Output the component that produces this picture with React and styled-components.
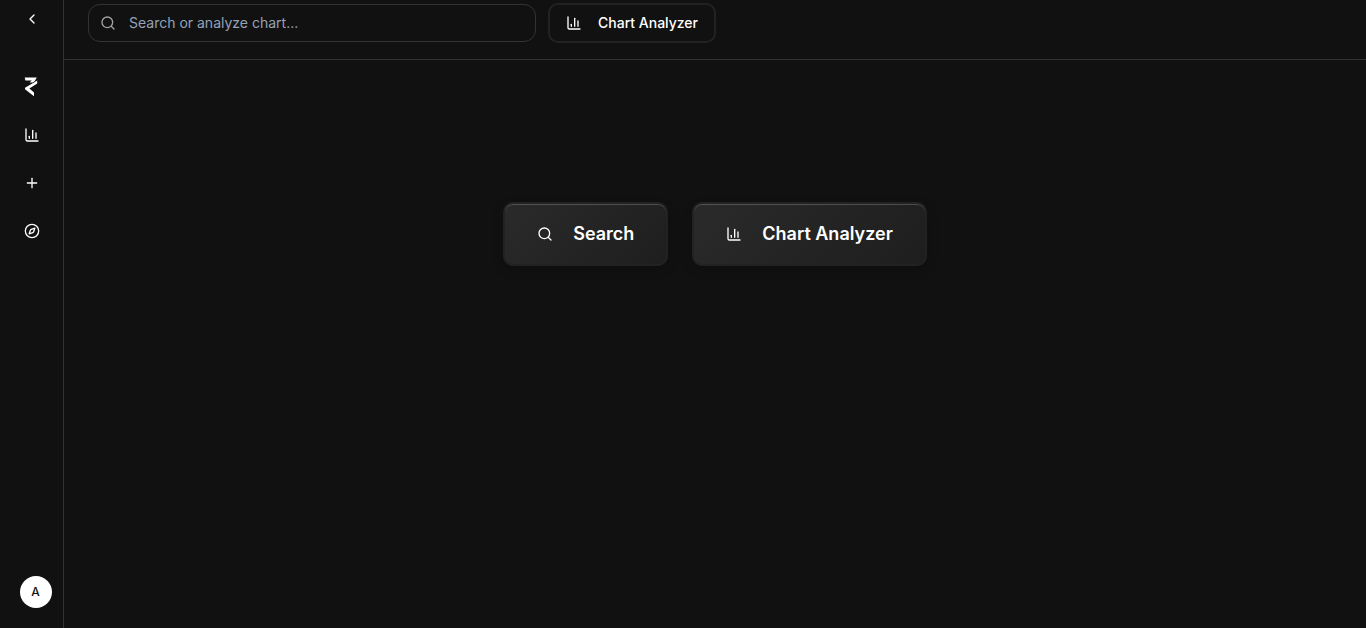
import React from "react";
import styled, { createGlobalStyle } from "styled-components";
import {
  ChartColumn,
  ChevronLeft,
  Compass,
  Plus,
  Search,
} from "lucide-react";

const RupeeLogo = () => (
  <svg width="16" height="20" viewBox="0 0 16 20" fill="#fff" aria-hidden="true">
    <path d="M0.7 0.4H12.8L10.6 4.2L8.6 5.6H5.6L7.8 3.4H1.4Z" />
    <path d="M13.2 3.4V6.4L5.4 11.4L10 15.6V19.2L1 12.2V10.8L9.6 5.8Z" />
  </svg>
);

const navItems = [
  { label: "Home", icon: <RupeeLogo /> },
  { label: "Charts", icon: <ChartColumn size={16} /> },
  { label: "New", icon: <Plus size={16} /> },
  { label: "Discover", icon: <Compass size={16} /> },
];

export default function App() {
  return (
    <>
      <GlobalStyle />
      <Layout>
        <Sidebar>
          <CollapseButton aria-label="Collapse sidebar">
            <ChevronLeft size={16} />
          </CollapseButton>
          <Nav>
            {navItems.map((item) => (
              <NavLink key={item.label} href="#" aria-label={item.label}>
                {item.icon}
              </NavLink>
            ))}
          </Nav>
          <Avatar aria-label="Account">A</Avatar>
        </Sidebar>
        <Content>
          <Header>
            <SearchBox>
              <Search size={16} />
              <input
                type="text"
                aria-label="Search"
                placeholder="Search or analyze chart..."
              />
            </SearchBox>
            <HeaderButton>
              <ChartColumn size={16} />
              Chart Analyzer
            </HeaderButton>
          </Header>
          <Main>
            <ActionButton>
              <Search size={16} />
              Search
            </ActionButton>
            <ActionButton>
              <ChartColumn size={16} />
              Chart Analyzer
            </ActionButton>
          </Main>
        </Content>
      </Layout>
    </>
  );
}

const GlobalStyle = createGlobalStyle`
  * {
    box-sizing: border-box;
  }
  body {
    margin: 0;
    background-color: #111111;
    color: #ffffff;
    font-family: "Inter", sans-serif;
  }
  button,
  input {
    font-family: inherit;
  }
  svg {
    flex-shrink: 0;
  }
`;

const Layout = styled.div`
  display: flex;
  min-height: 100vh;
`;

const Sidebar = styled.aside`
  display: flex;
  flex-direction: column;
  align-items: center;
  width: 64px;
  flex-shrink: 0;
  padding: 3px 0 20px;
  border-right: 1px solid #333333;
`;

const CollapseButton = styled.button`
  display: flex;
  align-items: center;
  justify-content: center;
  width: 32px;
  height: 32px;
  padding: 0;
  border: none;
  background: none;
  color: #ffffff;
  cursor: pointer;
`;

const Nav = styled.nav`
  display: flex;
  flex-direction: column;
  gap: 8px;
  margin-top: 32px;
`;

const NavLink = styled.a`
  display: flex;
  align-items: center;
  justify-content: center;
  width: 40px;
  height: 40px;
  color: #ffffff;
`;

const Avatar = styled.button`
  width: 32px;
  height: 32px;
  margin-top: auto;
  margin-left: 8px;
  padding: 0;
  border: none;
  border-radius: 50%;
  background-color: #ffffff;
  color: #111111;
  font-size: 12px;
  line-height: 16px;
  font-weight: 500;
  cursor: pointer;
`;

const Content = styled.div`
  display: flex;
  flex-direction: column;
  flex: 1;
  min-width: 0;
`;

const Header = styled.header`
  display: flex;
  align-items: center;
  gap: 12px;
  padding: 3px 24px 16px;
  border-bottom: 1px solid #333333;
`;

const SearchBox = styled.label`
  display: flex;
  align-items: center;
  gap: 13px;
  width: 100%;
  max-width: 448px;
  height: 38px;
  padding: 0 11px;
  border: 1px solid #333333;
  border-radius: 12px;
  color: #a3a3a3;
  input {
    flex: 1;
    min-width: 0;
    padding: 0;
    border: none;
    outline: none;
    background: none;
    color: #ffffff;
    font-size: 14px;
    line-height: 20px;
  }
  input::placeholder {
    color: #94a3b8;
    opacity: 1;
  }
`;

const HeaderButton = styled.button`
  display: flex;
  align-items: center;
  gap: 16px;
  height: 40px;
  padding: 0 16px;
  border: 2px solid #222222;
  border-radius: 10px;
  background: none;
  color: #ffffff;
  font-size: 14px;
  line-height: 20px;
  font-weight: 500;
  white-space: nowrap;
  cursor: pointer;
`;

const Main = styled.main`
  display: flex;
  justify-content: center;
  align-items: flex-start;
  gap: 24px;
  padding: 142px 24px 24px;
`;

const ActionButton = styled.button`
  display: flex;
  align-items: center;
  gap: 20px;
  height: 64px;
  padding: 0 32px;
  border: 2px solid #222222;
  border-radius: 10px;
  background: linear-gradient(135deg, #2a2a2a, #1e1e1e);
  box-shadow: 0 4px 12px rgba(0, 0, 0, 0.2),
    inset 0 1px 0 rgba(255, 255, 255, 0.2);
  color: #ffffff;
  font-size: 18px;
  line-height: 28px;
  font-weight: 600;
  white-space: nowrap;
  cursor: pointer;
`;
